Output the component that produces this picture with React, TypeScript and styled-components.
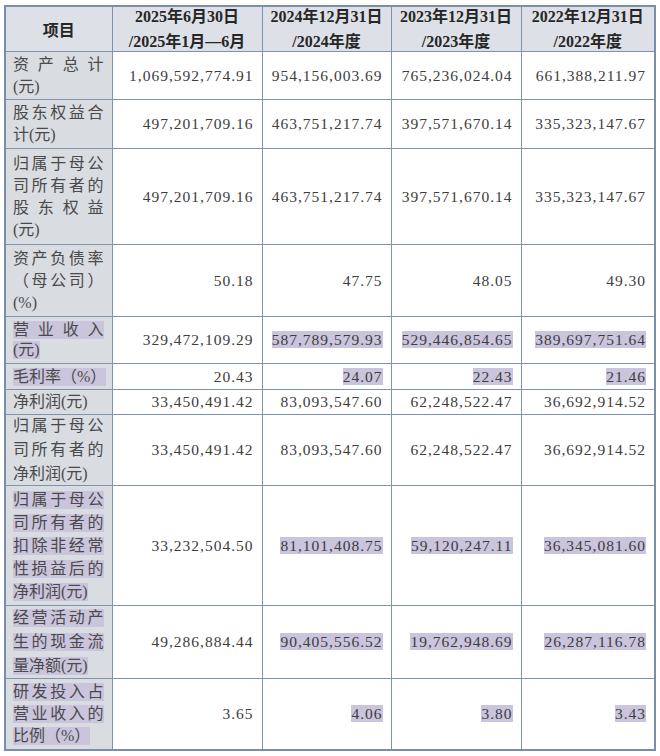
import React from 'react';
import styled, { createGlobalStyle, css } from 'styled-components';

const GlobalStyle = createGlobalStyle`
    html, body {
        margin: 0;
        padding: 0;
        background: #ffffff;
    }
`;

interface LabelLine {
    text: string;
    spread?: boolean;
}

interface RowData {
    height: number;
    gap: number;
    label: LabelLine[];
    values: string[];
    marked?: boolean;
}

const FONT = `"Liberation Serif", "Noto Sans CJK SC", serif`;

const headers = [
    ['2025年6月30日', '/2025年1月—6月'],
    ['2024年12月31日', '/2024年度'],
    ['2023年12月31日', '/2023年度'],
    ['2022年12月31日', '/2022年度'],
];

const rows: RowData[] = [
    {
        height: 48, gap: 4,
        label: [{ text: '资产总计', spread: true }, { text: '(元)' }],
        values: ['1,069,592,774.91', '954,156,003.69', '765,236,024.04', '661,388,211.97'],
    },
    {
        height: 49, gap: 4,
        label: [{ text: '股东权益合', spread: true }, { text: '计(元)' }],
        values: ['497,201,709.16', '463,751,217.74', '397,571,670.14', '335,323,147.67'],
    },
    {
        height: 96, gap: 4,
        label: [
            { text: '归属于母公', spread: true },
            { text: '司所有者的', spread: true },
            { text: '股东权益', spread: true },
            { text: '(元)' },
        ],
        values: ['497,201,709.16', '463,751,217.74', '397,571,670.14', '335,323,147.67'],
    },
    {
        height: 72, gap: 4,
        label: [
            { text: '资产负债率', spread: true },
            { text: '（母公司）', spread: true },
            { text: '(%)' },
        ],
        values: ['50.18', '47.75', '48.05', '49.30'],
    },
    {
        height: 47, gap: 2, marked: true,
        label: [{ text: '营业收入', spread: true }, { text: '(元)' }],
        values: ['329,472,109.29', '587,789,579.93', '529,446,854.65', '389,697,751.64'],
    },
    {
        height: 26, gap: 0, marked: true,
        label: [{ text: '毛利率（%）' }],
        values: ['20.43', '24.07', '22.43', '21.46'],
    },
    {
        height: 25, gap: 0,
        label: [{ text: '净利润(元)' }],
        values: ['33,450,491.42', '83,093,547.60', '62,248,522.47', '36,692,914.52'],
    },
    {
        height: 71, gap: 6,
        label: [
            { text: '归属于母公', spread: true },
            { text: '司所有者的', spread: true },
            { text: '净利润(元)' },
        ],
        values: ['33,450,491.42', '83,093,547.60', '62,248,522.47', '36,692,914.52'],
    },
    {
        height: 120, gap: 5, marked: true,
        label: [
            { text: '归属于母公', spread: true },
            { text: '司所有者的', spread: true },
            { text: '扣除非经常', spread: true },
            { text: '性损益后的', spread: true },
            { text: '净利润(元)' },
        ],
        values: ['33,232,504.50', '81,101,408.75', '59,120,247.11', '36,345,081.60'],
    },
    {
        height: 73, gap: 6, marked: true,
        label: [
            { text: '经营活动产', spread: true },
            { text: '生的现金流', spread: true },
            { text: '量净额(元)' },
        ],
        values: ['49,286,884.44', '90,405,556.52', '19,762,948.69', '26,287,116.78'],
    },
    {
        height: 71, gap: 4, marked: true,
        label: [
            { text: '研发投入占', spread: true },
            { text: '营业收入的', spread: true },
            { text: '比例（%）' },
        ],
        values: ['3.65', '4.06', '3.80', '3.43'],
    },
];

const App: React.FC = () => {
    return (
        <>
            <GlobalStyle />
            <Page>
                <Table>
                    <colgroup>
                        <col style={{ width: 107 }} />
                        <col style={{ width: 150 }} />
                        <col style={{ width: 129 }} />
                        <col style={{ width: 130 }} />
                        <col style={{ width: 134 }} />
                    </colgroup>
                    <thead>
                        <Row height={45}>
                            <HeadCell>项目</HeadCell>
                            {headers.map(lines => (
                                <HeadCell key={lines[0]}>
                                    <HeadStack>
                                        {lines.map(line => (
                                            <HeadLine key={line}>{line}</HeadLine>
                                        ))}
                                    </HeadStack>
                                </HeadCell>
                            ))}
                        </Row>
                    </thead>
                    <tbody>
                        {rows.map((row, i) => (
                            <Row key={i} height={row.height}>
                                <LabelCell>
                                    <LabelStack gap={row.gap}>
                                        {row.label.map((line, j) => (
                                            <Line key={j} spread={!!line.spread} marked={!!row.marked}>
                                                {line.spread
                                                    ? Array.from(line.text).map((ch, k) => <span key={k}>{ch}</span>)
                                                    : line.text}
                                            </Line>
                                        ))}
                                    </LabelStack>
                                </LabelCell>
                                {row.values.map((value, j) => (
                                    <ValueCell key={j}>
                                        <Value marked={!!row.marked && j > 0}>{value}</Value>
                                    </ValueCell>
                                ))}
                            </Row>
                        ))}
                    </tbody>
                </Table>
            </Page>
        </>
    );
};

const Page = styled.div`
    width: 660px;
    height: 756px;
    padding: 5px 0 0 4px;
    box-sizing: border-box;
    background: #ffffff;
`;

const Table = styled.table`
    border-collapse: collapse;
    table-layout: fixed;
    width: 652px;
    border: 2px solid #7a8ea8;
    font-family: ${FONT};
    color: #353535;
`;

const Row = styled.tr<{ height: number }>`
    height: ${props => props.height}px;
`;

const cellBase = css`
    border: 1px solid #7f93ad;
    padding: 0;
    vertical-align: middle;
`;

const HeadCell = styled.th`
    ${cellBase};
    background: #dde1e7;
    font-size: 16px;
    font-weight: 700;
    color: #262626;
    text-align: center;
`;

const HeadStack = styled.div`
    display: flex;
    flex-direction: column;
    align-items: center;
    gap: 6px;
`;

const HeadLine = styled.div`
    height: 19px;
    line-height: 19px;
    white-space: nowrap;
`;

const LabelCell = styled.td`
    ${cellBase};
    background: #d9dce1;
    padding: 0 8px 0 7px;
`;

const LabelStack = styled.div<{ gap: number }>`
    display: flex;
    flex-direction: column;
    align-items: flex-start;
    gap: ${props => props.gap}px;
`;

const Line = styled.div<{ spread: boolean; marked: boolean }>`
    height: 18px;
    line-height: 18px;
    font-size: 16px;
    color: #4a4a4a;
    white-space: nowrap;
    ${props => props.spread && css`
        display: flex;
        justify-content: space-between;
        align-self: stretch;
    `}
    ${props => props.marked && css`
        background: #cac4dc;
    `}
`;

const ValueCell = styled.td`
    ${cellBase};
    background: #ffffff;
    text-align: right;
    padding-right: 8px;
    white-space: nowrap;
`;

const Value = styled.span<{ marked: boolean }>`
    font-size: 15.5px;
    letter-spacing: 1px;
    line-height: 18px;
    color: #3d3d3d;
    ${props => props.marked && css`
        background: #cac4dc;
    `}
`;

export default App;
